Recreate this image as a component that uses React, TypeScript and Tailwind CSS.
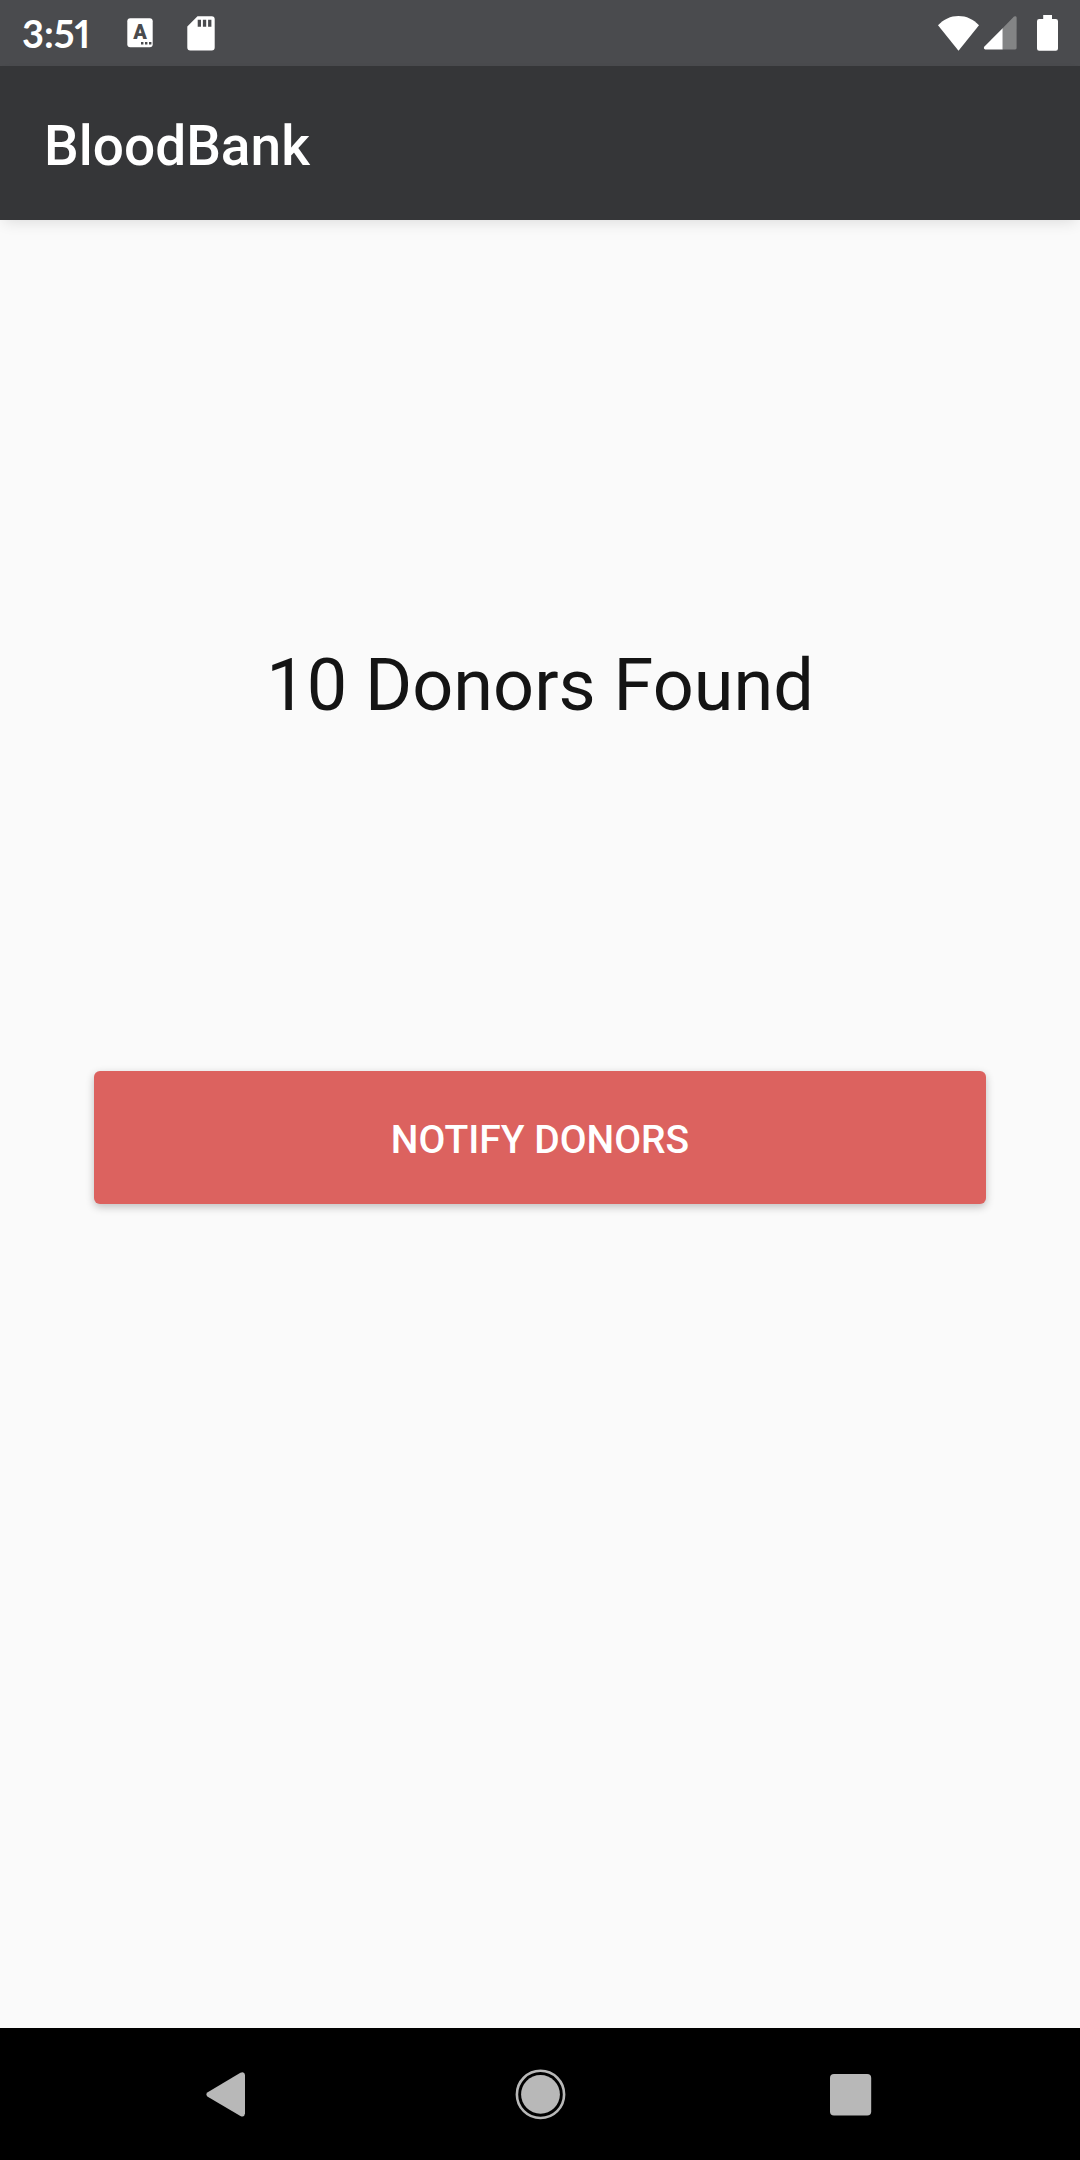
function LanguageIcon() {
  return (
    <svg width="26" height="30" viewBox="0 0 26 30" aria-hidden="true">
      <rect x="0.3" y="0.3" width="25.4" height="29" rx="3" fill="#fff" />
      <text x="13" y="21" textAnchor="middle" fill="#4a4b4e" className="font-['Roboto'] text-[20px] font-black">
        A
      </text>
      <path d="M14 24h2.4v2.4H14zM18 24h2.4v2.4H18zM22 24h2.4v2.4H22z" fill="#4a4b4e" />
    </svg>
  );
}

function SdCardIcon() {
  return (
    <svg width="28" height="35" viewBox="0 0 28 35" aria-hidden="true">
      <path
        fill="#fff"
        fillRule="evenodd"
        d="M10.5 0.3H24.7A3 3 0 0 1 27.7 3.3V31.5A3 3 0 0 1 24.7 34.5H3.3A3 3 0 0 1 0.3 31.5V10.5ZM10.7 3.7V10.7H14V3.7ZM15.9 3.7V10.7H19.2V3.7ZM21.1 3.7V10.7H24.4V3.7Z"
      />
    </svg>
  );
}

function WifiIcon() {
  return (
    <svg width="41" height="35" viewBox="0 0 41 35" aria-hidden="true">
      <path d="M0 9.3C5.6 3.3 12.6 0 20.5 0S35.4 3.3 41 9.3L20.5 34.7Z" fill="#fff" />
    </svg>
  );
}

function SignalIcon() {
  return (
    <svg width="34" height="34" viewBox="0 0 34 34" aria-hidden="true">
      <path d="M19.6 12.2L31 0.6Q33.3 -0.6 33.6 1.6V32Q33.6 33.4 32.2 33.4H19.6Z" fill="#838485" />
      <path d="M19.6 12.2V33.4H2.2Q0.2 33 1.2 30.8Z" fill="#fff" />
    </svg>
  );
}

function BatteryIcon() {
  return (
    <svg width="21" height="36" viewBox="0 0 21 36" aria-hidden="true">
      <path
        d="M6.2 0H15V4H18.8A2.2 2.2 0 0 1 21 6.2V33.6A2.2 2.2 0 0 1 18.8 35.8H2.2A2.2 2.2 0 0 1 0 33.6V6.2A2.2 2.2 0 0 1 2.2 4H6.2Z"
        fill="#fff"
      />
    </svg>
  );
}

function StatusBar() {
  return (
    <div className="flex h-[66px] items-center justify-between bg-[#4a4b4e] px-[22px]">
      <div className="flex items-center">
        <time className="w-[105px] font-['Lato'] text-[38px] leading-[44px] font-bold proportional-nums">3:51</time>
        <LanguageIcon />
        <div className="ml-[34px]">
          <SdCardIcon />
        </div>
      </div>
      <div className="flex items-center">
        <WifiIcon />
        <div className="mr-5 ml-1">
          <SignalIcon />
        </div>
        <BatteryIcon />
      </div>
    </div>
  );
}

function NavigationBar() {
  return (
    <nav aria-label="System navigation" className="flex h-[132px] bg-black px-[75px] text-[#b8b8b8]">
      <button type="button" aria-label="Back" className="flex flex-1 items-center justify-center">
        <svg width="50" height="50" viewBox="0 0 50 50" aria-hidden="true">
          <path
            d="M2.3 23.6L35.4 3.7Q39.6 2 40 6V44.6Q39.6 48.6 35.4 46.9L2.3 27.4Q0.4 25.5 2.3 23.6Z"
            fill="currentColor"
          />
        </svg>
      </button>
      <button type="button" aria-label="Home" className="flex flex-1 items-center justify-center">
        <svg width="52" height="52" viewBox="0 0 52 52" aria-hidden="true">
          <circle cx="26.5" cy="26.4" r="23.6" fill="none" stroke="currentColor" strokeWidth="2.6" />
          <circle cx="26.5" cy="26.4" r="19.4" fill="currentColor" />
        </svg>
      </button>
      <button type="button" aria-label="Overview" className="flex flex-1 items-center justify-center">
        <svg width="50" height="50" viewBox="0 0 50 50" aria-hidden="true">
          <rect x="5" y="5" width="41.2" height="41.4" rx="4" fill="currentColor" />
        </svg>
      </button>
    </nav>
  );
}

export default function App() {
  return (
    <div className="flex min-h-screen flex-col bg-[#fafafa] font-['Roboto',sans-serif] text-white">
      <StatusBar />
      <header className="flex h-[154px] items-center bg-[#353638] px-11 pt-1.5 shadow-[0_6px_14px_-4px_rgba(0,0,0,0.12)]">
        <h1 className="text-[55px] leading-[64px] font-medium">BloodBank</h1>
      </header>
      <main className="flex flex-1 flex-col px-[94px] pt-[424px]">
        <p className="text-center text-[72px] leading-[84px] text-[#141414]">10 Donors Found</p>
        <button
          type="button"
          className="mt-[343px] h-[133px] rounded-[6px] bg-[#dc625f] pt-1 text-[39px] leading-[46px] font-medium uppercase shadow-[0_3px_8px_rgba(0,0,0,0.24)]"
        >
          Notify Donors
        </button>
      </main>
      <NavigationBar />
    </div>
  );
}
